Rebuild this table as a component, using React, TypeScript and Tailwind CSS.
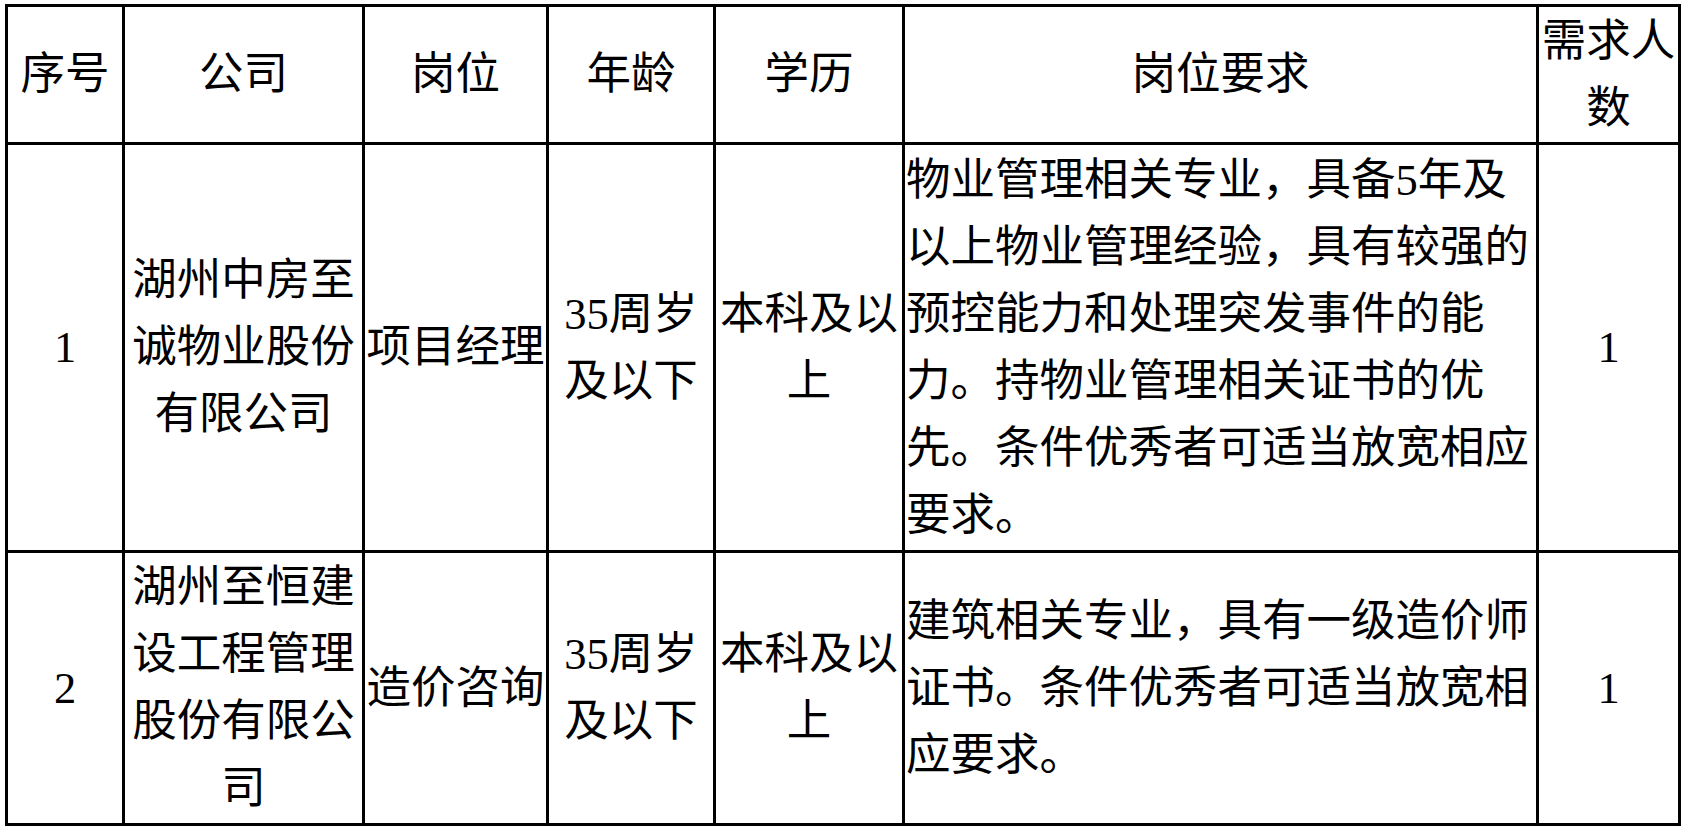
const rows = [
  {
    no: "1",
    company: "湖州中房至诚物业股份有限公司",
    position: "项目经理",
    age: "35周岁及以下",
    edu: "本科及以上",
    req: "物业管理相关专业，具备5年及以上物业管理经验，具有较强的预控能力和处理突发事件的能力。持物业管理相关证书的优先。条件优秀者可适当放宽相应要求。",
    count: "1",
    height: "h-[408px]",
  },
  {
    no: "2",
    company: "湖州至恒建设工程管理股份有限公司",
    position: "造价咨询",
    age: "35周岁及以下",
    edu: "本科及以上",
    req: "建筑相关专业，具有一级造价师证书。条件优秀者可适当放宽相应要求。",
    count: "1",
    height: "h-[273px]",
  },
];

const headers = ["序号", "公司", "岗位", "年龄", "学历", "岗位要求", "需求人数"];

const cell = "border-[3px] border-black p-0 text-center align-middle";

export default function App() {
  return (
    <div
      className="min-h-screen bg-white pl-[5px] pt-[4px] text-black"
      style={{ fontFamily: '"Liberation Serif", "Noto Sans CJK SC", serif' }}
    >
      <table className="w-[1676px] table-fixed border-collapse text-[44.5px] leading-[67px]">
        <colgroup>
          <col className="w-[117px]" />
          <col className="w-[240px]" />
          <col className="w-[184px]" />
          <col className="w-[167px]" />
          <col className="w-[189px]" />
          <col className="w-[634px]" />
          <col className="w-[142px]" />
        </colgroup>
        <thead>
          <tr className="h-[138px]">
            {headers.map((h) => (
              <th key={h} className={`${cell} font-normal`}>
                {h}
              </th>
            ))}
          </tr>
        </thead>
        <tbody>
          {rows.map((r) => (
            <tr key={r.no} className={r.height}>
              <td className={cell}>{r.no}</td>
              <td className={`${cell} px-[3px]`}>{r.company}</td>
              <td className={cell}>{r.position}</td>
              <td className={`${cell} px-[14px]`}>{r.age}</td>
              <td className={cell}>{r.edu}</td>
              <td className={`${cell} px-[1px] text-left`}>{r.req}</td>
              <td className={cell}>{r.count}</td>
            </tr>
          ))}
        </tbody>
      </table>
    </div>
  );
}
